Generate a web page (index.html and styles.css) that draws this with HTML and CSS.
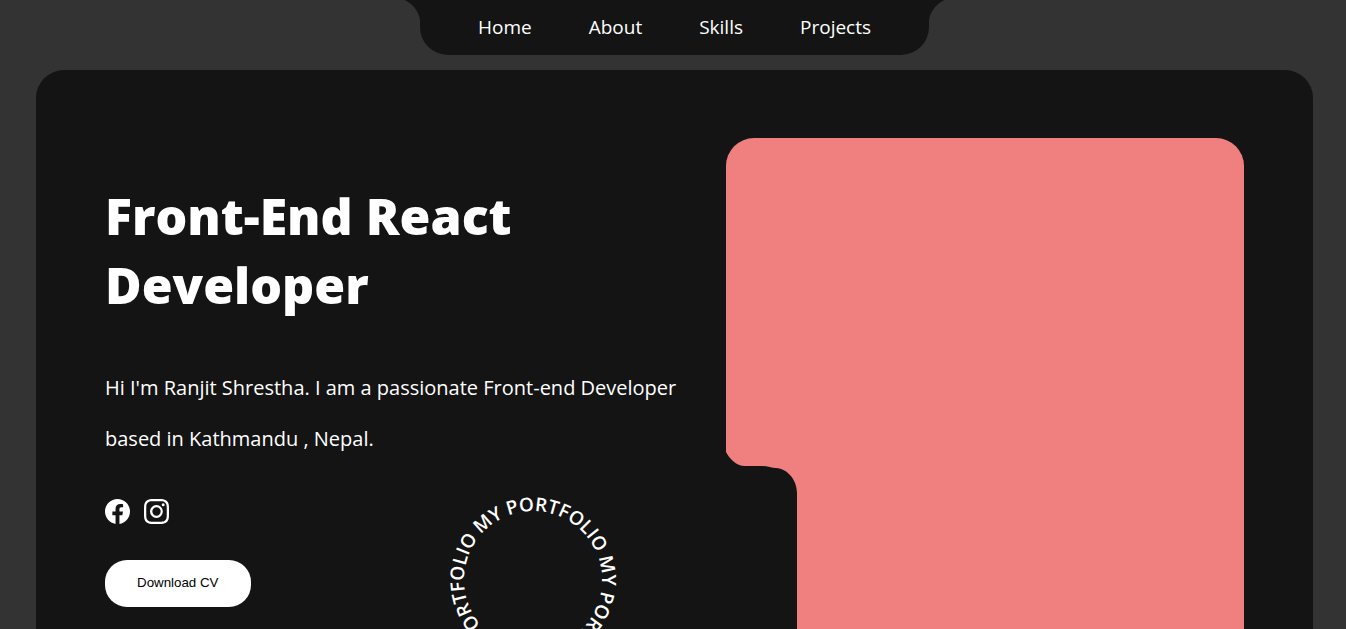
FILE: index.html
```html
<!DOCTYPE html>
<html lang="en">
<head>
<meta charset="utf-8">
<meta name="viewport" content="width=device-width, initial-scale=1">
<title>Ranjit Shrestha | Portfolio</title>
<link rel="stylesheet" href="styles.css">
</head>
<body>
<div class="page">
  <nav class="nav" aria-label="Main">
    <a href="#home">Home</a>
    <a href="#about">About</a>
    <a href="#skills">Skills</a>
    <a href="#projects">Projects</a>
  </nav>
  <main class="hero" id="home">
    <section class="intro">
      <h1 class="title">Front-End React Developer</h1>
      <p class="lead">Hi I'm Ranjit Shrestha. I am a passionate Front-end Developer based in Kathmandu , Nepal.</p>
      <div class="actions">
        <div class="contact">
          <div class="social">
            <a href="#facebook" aria-label="Facebook">
              <svg class="icon" viewBox="0 0 16 16"><path d="M16 8.049c0-4.446-3.582-8.05-8-8.05C3.58 0-.002 3.603-.002 8.05c0 4.017 2.926 7.347 6.75 7.951v-5.625h-2.03V8.05H6.75V6.275c0-2.017 1.195-3.131 3.022-3.131.876 0 1.791.157 1.791.157v1.98h-1.009c-.993 0-1.303.621-1.303 1.258v1.51h2.218l-.354 2.326H9.25V16c3.824-.604 6.75-3.934 6.75-7.951"/></svg>
            </a>
            <a href="#instagram" aria-label="Instagram">
              <svg class="icon" viewBox="0 0 16 16"><path d="M8 0C5.829 0 5.556.01 4.703.048 3.85.088 3.269.222 2.76.42a3.9 3.9 0 0 0-1.417.923A3.9 3.9 0 0 0 .42 2.76C.222 3.268.087 3.85.048 4.7.01 5.555 0 5.827 0 8.001c0 2.172.01 2.444.048 3.297.04.852.174 1.433.372 1.942.205.526.478.972.923 1.417.444.445.89.719 1.416.923.51.198 1.09.333 1.942.372C5.555 15.99 5.827 16 8 16s2.444-.01 3.298-.048c.851-.04 1.434-.174 1.943-.372a3.9 3.9 0 0 0 1.416-.923c.445-.445.718-.891.923-1.417.197-.509.332-1.09.372-1.942C15.99 10.445 16 10.173 16 8s-.01-2.445-.048-3.299c-.04-.851-.175-1.433-.372-1.941a3.9 3.9 0 0 0-.923-1.417A3.9 3.9 0 0 0 13.24.42c-.51-.198-1.092-.333-1.943-.372C10.443.01 10.172 0 7.998 0zm-.717 1.442h.718c2.136 0 2.389.007 3.232.046.78.035 1.204.166 1.486.275.373.145.64.319.92.599s.453.546.598.92c.11.281.24.705.275 1.485.039.843.047 1.096.047 3.231s-.008 2.389-.047 3.232c-.035.78-.166 1.203-.275 1.485a2.5 2.5 0 0 1-.599.919c-.28.28-.546.453-.92.598-.28.11-.704.24-1.485.276-.843.038-1.096.047-3.232.047s-2.39-.009-3.233-.047c-.78-.036-1.203-.166-1.485-.276a2.5 2.5 0 0 1-.92-.598 2.5 2.5 0 0 1-.6-.92c-.109-.281-.24-.705-.275-1.485-.038-.843-.046-1.096-.046-3.233s.008-2.388.046-3.231c.036-.78.166-1.204.276-1.486.145-.373.319-.64.599-.92s.546-.453.92-.598c.282-.11.705-.24 1.485-.276.738-.034 1.024-.044 2.515-.045zm4.988 1.328a.96.96 0 1 0 0 1.92.96.96 0 0 0 0-1.92m-4.27 1.122a4.109 4.109 0 1 0 0 8.217 4.109 4.109 0 0 0 0-8.217m0 1.441a2.667 2.667 0 1 1 0 5.334 2.667 2.667 0 0 1 0-5.334"/></svg>
            </a>
          </div>
          <button class="download" type="button">Download CV</button>
        </div>
        <svg class="ring" viewBox="0 0 170 170" role="img" aria-label="My portfolio">
          <path id="ring-path" fill="none" d="M32.9 39.7A69 69 0 0 1 137.1 130.3A69 69 0 0 1 32.9 39.7"/>
          <text><textPath href="#ring-path">MY PORTFOLIO</textPath></text>
          <text><textPath href="#ring-path" startOffset="144">MY PORTFOLIO</textPath></text>
          <text><textPath href="#ring-path" startOffset="289">MY PORTFOLIO</textPath></text>
        </svg>
      </div>
    </section>
    <div class="portrait">
      <svg class="notch" viewBox="0 0 72 200" aria-hidden="true"><path d="M0 0C3 6 10 14 19 14H36C42 14 46 16 50 16C62 17 71 28 71 41V200H0Z"/></svg>
    </div>
  </main>
</div>
</body>
</html>
```

FILE: styles.css
```css
* {
  box-sizing: border-box;
}

body {
  margin: 0;
  background: #333;
  color: #fff;
  font-family: "Open Sans", "Noto Sans", sans-serif;
}

a {
  color: inherit;
  text-decoration: none;
}

.page {
  display: flex;
  flex-direction: column;
  align-items: center;
  gap: 15px;
  height: 100vh;
  padding: 0 33px 0 36px;
  overflow: hidden;
}

.nav {
  position: relative;
  display: flex;
  gap: 57px;
  padding: 14px 58px;
  border-radius: 0 0 28px 28px;
  background: #141414;
  font-size: 19px;
  line-height: 27px;
}

.nav::before,
.nav::after {
  content: "";
  position: absolute;
  top: 0;
  width: 27px;
  height: 25px;
}

.nav::before {
  right: 100%;
  background: radial-gradient(circle at 0 100%, transparent 27px, #141414 28px);
}

.nav::after {
  left: 100%;
  background: radial-gradient(circle at 100% 100%, transparent 27px, #141414 28px);
}

.hero {
  display: grid;
  grid-template-columns: 1fr 518px;
  gap: 40px;
  flex: 1 0 700px;
  width: 100%;
  padding: 68px 69px;
  border-radius: 28px;
  background: #141414;
}

.intro {
  padding-top: 44px;
}

.title {
  max-width: 480px;
  margin: 0;
  font-size: 50px;
  font-weight: 800;
  line-height: 69px;
}

.lead {
  margin: 42px 0 0;
  font-size: 20px;
  line-height: 51px;
}

.actions {
  display: flex;
  justify-content: space-between;
  padding: 31px 68px 0 0;
}

.contact {
  padding-top: 4px;
}

.social {
  display: flex;
  gap: 14px;
}

.icon {
  display: block;
  width: 25px;
  height: 25px;
  fill: #fff;
}

.download {
  margin-top: 36px;
  padding: 15px 32px 17px;
  border: 0;
  border-radius: 22px;
  background: #fff;
  color: #000;
  font-family: "Liberation Sans", Arial, sans-serif;
}

.ring {
  width: 170px;
  height: 170px;
  fill: #fff;
  font-size: 19px;
  font-weight: 600;
  overflow: visible;
}

.portrait {
  position: relative;
  border-radius: 28px;
  background: #f08080;
}

.notch {
  position: absolute;
  top: 314px;
  left: 0;
  width: 72px;
  height: 200px;
  fill: #141414;
}
```
